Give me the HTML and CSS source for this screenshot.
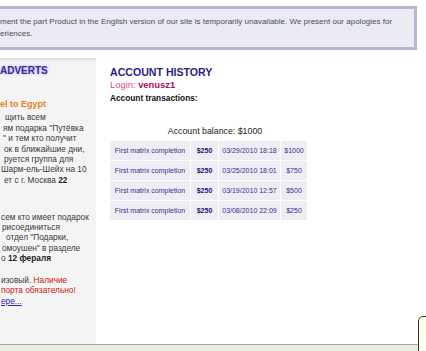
FILE: index.html
```html
<!DOCTYPE html>
<html>
<head>
<meta charset="utf-8">
<link rel="stylesheet" href="styles.css">
</head>
<body>
<div class="page">
  <div class="notice">ment the part Product in the English version of our site is temporarily unavailable. We present our apologies for<br>eriences.</div>
  <div class="content">
    <aside class="adverts">
      <div class="adv-head">ADVERTS</div>
      <div class="adv-title">el to Egypt</div>
      <p class="adv-p p1">
        <span class="ln i5">щить всем</span>
        <span class="ln i3">ям подарка "Путёвка</span>
        <span class="ln i3">" и тем кто получит</span>
        <span class="ln i4">ок в ближайшие дни,</span>
        <span class="ln i4">руется группа для</span>
        <span class="ln i1">Шарм-ель-Шейх на 10</span>
        <span class="ln i4">ет с г. Москва <b>22</b></span>
      </p>
      <p class="adv-p p2">
        <span class="ln i1">сем кто имеет подарок</span>
        <span class="ln i2">рисоединиться</span>
        <span class="ln i6">отдел "Подарки,</span>
        <span class="ln i2">омоушен" в разделе</span>
        <span class="ln i1">о <b>12 фераля</b></span>
      </p>
      <p class="adv-p p3">
        <span class="ln i1">изовый. <span class="red">Наличие</span></span>
        <span class="ln i1 red">порта обязательно!</span>
        <span class="ln i1"><a href="#" class="more">ере...</a></span>
      </p>
    </aside>
    <main class="main">
      <h1 class="title">ACCOUNT HISTORY</h1>
      <div class="login">Login: <b>venusz1</b></div>
      <div class="subtitle">Account transactions:</div>
      <div class="balance">Account balance: $1000</div>
      <table class="tx">
        <tr><td class="c1">First matrix completion</td><td class="c2">$250</td><td class="c3">03/29/2010 18:18</td><td class="c4">$1000</td></tr>
        <tr><td class="c1">First matrix completion</td><td class="c2">$250</td><td class="c3">03/25/2010 18:01</td><td class="c4">$750</td></tr>
        <tr><td class="c1">First matrix completion</td><td class="c2">$250</td><td class="c3">03/19/2010 12:57</td><td class="c4">$500</td></tr>
        <tr><td class="c1">First matrix completion</td><td class="c2">$250</td><td class="c3">03/08/2010 22:09</td><td class="c4">$250</td></tr>
      </table>
    </main>
  </div>
  <div class="statusbar"></div>
  <div class="tip"></div>
</div>
</body>
</html>
```

FILE: styles.css
```css
html, body {
  margin: 0;
  padding: 0;
  background: #fff;
}
.page {
  position: relative;
  width: 426px;
  height: 351px;
  overflow: hidden;
  display: flex;
  flex-direction: column;
  font-family: "Liberation Sans", Arial, sans-serif;
}
.notice {
  margin: 6px 9px 0 -10px;
  border: 3px solid #b6b6d4;
  background: #ebebf4;
  padding: 7px 0 7px 7px;
  font-size: 8px;
  line-height: 12px;
  color: #4c4c5c;
  white-space: nowrap;
}
.content {
  margin-top: 8px;
  height: 286px;
  display: flex;
  gap: 14px;
}
.adverts {
  width: 96px;
  flex: none;
  background: #f4f4f4;
  background-image: linear-gradient(#dcdcdc, #f4f4f4 4px);
  padding-top: 6px;
  box-sizing: border-box;
  color: #3a3a3a;
}
.adv-head {
  font-weight: bold;
  font-size: 10px;
  line-height: 14px;
  color: #3a2c9c;
  text-shadow: 0 0 3px #c4b8f0, 0 0 2px #c4b8f0;
}
.adv-title {
  margin-top: 21px;
  font-weight: bold;
  font-size: 9px;
  line-height: 11px;
  color: #e8801c;
}
.adv-p {
  margin: 0;
  font-size: 8.3px;
  line-height: 10.4px;
}
.adv-p b { color: #222; }
.p1 { margin-top: 2.3px; }
.p2 { margin-top: 26.5px; }
.p3 { margin-top: 11.3px; }
.ln {
  display: block;
  white-space: nowrap;
}
.i1 { padding-left: 1px; }
.i2 { padding-left: 2px; }
.i3 { padding-left: 3px; }
.i4 { padding-left: 4px; }
.i5 { padding-left: 5px; }
.i6 { padding-left: 6px; }
.red { color: #c42020; }
.more { color: #2a2aa0; text-decoration: underline; }
.main {
  width: 210px;
  padding-top: 8px;
}
.title {
  margin: 0;
  font-size: 10.6px;
  line-height: 12px;
  font-weight: bold;
  color: #2c1c84;
}
.login {
  margin-top: 0.5px;
  font-size: 9.4px;
  line-height: 12px;
  color: #d0508e;
}
.login b { color: #a4105e; }
.subtitle {
  margin-top: 1px;
  font-size: 8.3px;
  line-height: 12px;
  font-weight: bold;
  color: #111;
}
.balance {
  margin-top: 21px;
  font-size: 8.8px;
  line-height: 12px;
  color: #222;
  text-align: center;
}
.tx {
  margin: 3px 0 0 -1px;
  border-collapse: separate;
  border-spacing: 1px;
  font-size: 7px;
  color: #3a3090;
}
.tx td {
  height: 19px;
  padding: 0;
  background: #ededf3;
  text-align: center;
  white-space: nowrap;
}
.tx .c1 { width: 80px; }
.tx .c2 { width: 27px; font-weight: bold; color: #1c1470; }
.tx .c3 { width: 61px; }
.tx .c4 { width: 26px; }
.statusbar {
  flex: 1;
  border-top: 1px solid #a9a89e;
  background: #ecebdf;
}
.tip {
  position: absolute;
  left: 418px;
  top: 316px;
  width: 20px;
  height: 50px;
  border: 1px solid #333;
  border-top-left-radius: 5px;
  background: #fffff0;
}
```
